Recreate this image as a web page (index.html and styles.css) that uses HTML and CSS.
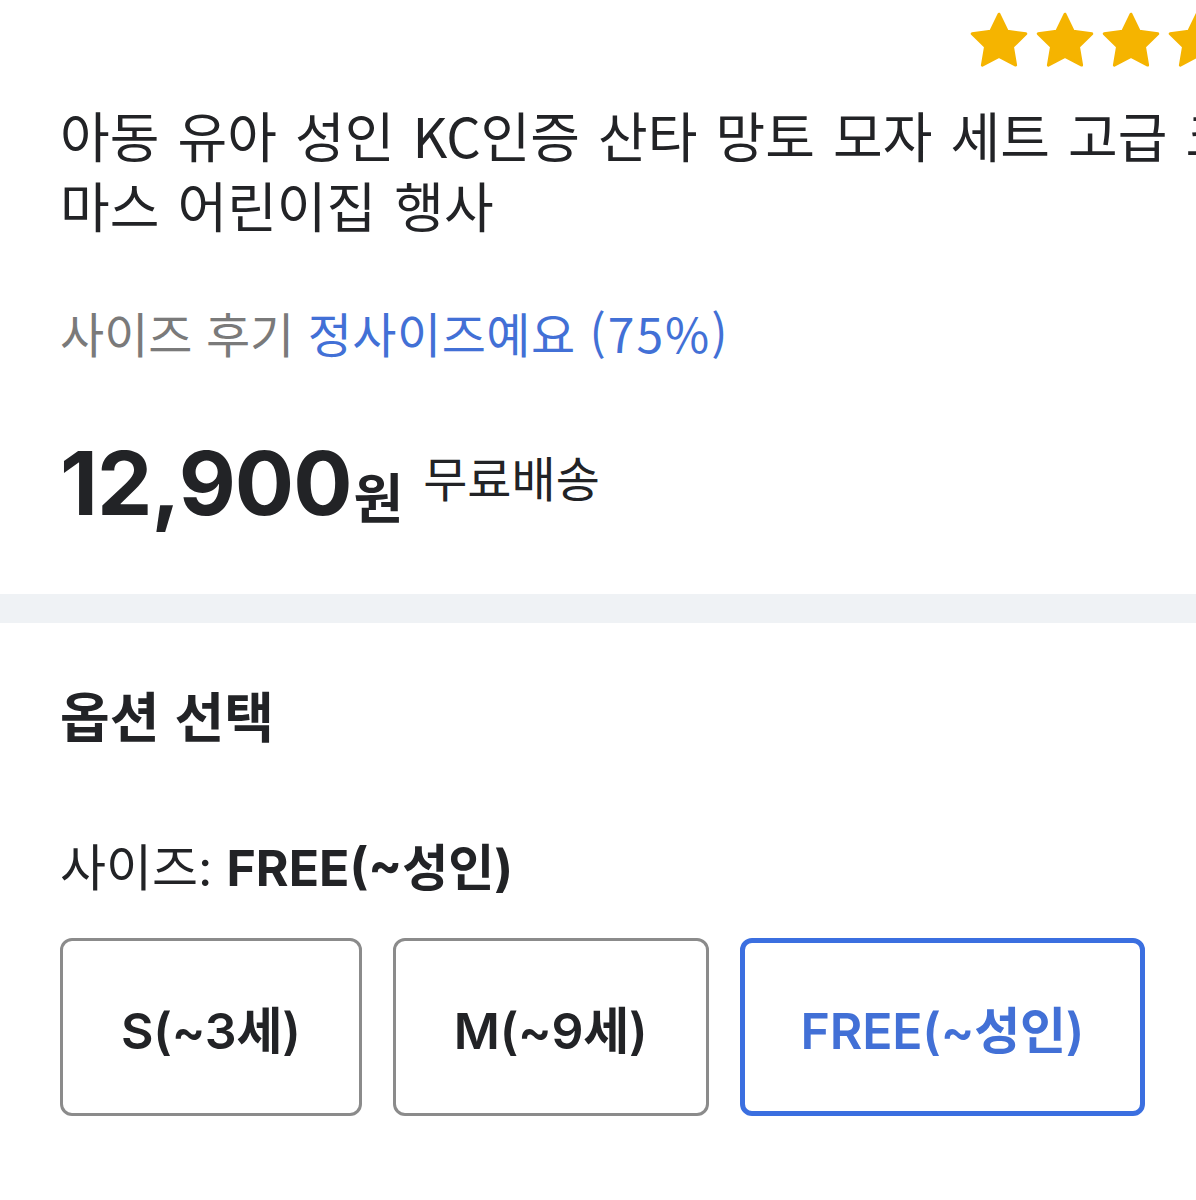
FILE: index.html
```html
<!DOCTYPE html>
<html lang="ko">
<head>
<meta charset="utf-8">
<link rel="stylesheet" href="styles.css">
</head>
<body>
<div class="page">
  <section class="summary">
    <div class="rating">
      <svg class="star" viewBox="0 0 24 24"><path d="M12 0.9L15.4 7.9 23.1 9 17.6 14.4 18.9 22 12 18.4 5.1 22 6.4 14.4 0.9 9 8.6 7.9Z"/></svg>
      <svg class="star" viewBox="0 0 24 24"><path d="M12 0.9L15.4 7.9 23.1 9 17.6 14.4 18.9 22 12 18.4 5.1 22 6.4 14.4 0.9 9 8.6 7.9Z"/></svg>
      <svg class="star" viewBox="0 0 24 24"><path d="M12 0.9L15.4 7.9 23.1 9 17.6 14.4 18.9 22 12 18.4 5.1 22 6.4 14.4 0.9 9 8.6 7.9Z"/></svg>
      <svg class="star" viewBox="0 0 24 24"><path d="M12 0.9L15.4 7.9 23.1 9 17.6 14.4 18.9 22 12 18.4 5.1 22 6.4 14.4 0.9 9 8.6 7.9Z"/></svg>
      <svg class="star" viewBox="0 0 24 24"><path d="M12 0.9L15.4 7.9 23.1 9 17.6 14.4 18.9 22 12 18.4 5.1 22 6.4 14.4 0.9 9 8.6 7.9Z"/></svg>
    </div>
    <h1 class="title">아동 유아 성인 KC인증 산타 망토 모자 세트 고급 크리스마스 어린이집 행사</h1>
    <p class="size-review">사이즈 후기 <span class="accent">정사이즈예요 <span class="pct">(75%)</span></span></p>
    <div class="price-row">
      <span class="price">12,900</span><span class="won">원</span>
      <span class="shipping">무료배송</span>
    </div>
  </section>
  <div class="divider"></div>
  <section class="options">
    <h2 class="options-title">옵션 선택</h2>
    <p class="selected-label">사이즈: <strong>FREE(~성인)</strong></p>
    <div class="choices">
      <button class="choice">S(~3세)</button>
      <button class="choice">M(~9세)</button>
      <button class="choice is-selected">FREE(~성인)</button>
    </div>
  </section>
</div>
</body>
</html>
```
FILE: styles.css
```css
html, body {
  margin: 0;
  padding: 0;
  background: #ffffff;
  overflow: hidden;
}
body {
  width: 1196px;
  font-family: Inter, "Noto Sans CJK KR", sans-serif;
  color: #222326;
}
.page {
  width: 1440px;
}
.summary {
  padding: 12px 60px 0 60px;
}
.rating {
  display: flex;
  justify-content: flex-end;
  gap: 8px;
  padding-right: 88px;
  height: 58px;
}
.star {
  width: 58px;
  height: 58px;
  fill: #f5b400;
  stroke: #f5b400;
  stroke-width: 1.2;
  stroke-linejoin: round;
}
.title {
  margin: 30px 0 0 0;
  font-family: "Noto Sans CJK KR", sans-serif;
  font-weight: 400;
  font-size: 54px;
  line-height: 70px;
  word-spacing: 3px;
  color: #222326;
}
.size-review {
  margin: 62px 0 0 0;
  font-family: "Noto Sans CJK KR", sans-serif;
  font-size: 48px;
  line-height: 60px;
  color: #7a7a7a;
}
.accent {
  color: #4270d6;
  letter-spacing: 0.5px;
}
.pct {
  letter-spacing: 2px;
}
.price-row {
  display: flex;
  align-items: flex-start;
  margin-top: 76px;
  height: 90px;
}
.price {
  font-family: Inter, sans-serif;
  font-weight: 700;
  font-size: 88px;
  line-height: 90px;
  letter-spacing: -1px;
  color: #222326;
}
.won {
  font-family: "Noto Sans CJK KR", sans-serif;
  font-weight: 700;
  font-size: 54px;
  line-height: 52px;
  margin-top: 32px;
  margin-left: 2px;
}
.shipping {
  font-family: "Noto Sans CJK KR", sans-serif;
  font-size: 48px;
  line-height: 52px;
  margin-left: 20px;
  margin-top: 12px;
  color: #222326;
}
.divider {
  margin-top: 66px;
  height: 29px;
  background: #eff2f5;
}
.options {
  padding: 57px 60px 0 60px;
}
.options-title {
  margin: 0;
  font-family: "Noto Sans CJK KR", sans-serif;
  font-weight: 700;
  font-size: 54px;
  line-height: 70px;
}
.selected-label {
  margin: 88px 0 0 0;
  font-family: Inter, "Noto Sans CJK KR", sans-serif;
  font-size: 50px;
  line-height: 60px;
}
.selected-label strong {
  font-weight: 700;
}
.choices {
  display: flex;
  gap: 31px;
  margin-top: 40px;
}
.choice {
  height: 178px;
  padding: 0 58px;
  background: #ffffff;
  border: 3px solid #8b8b8b;
  border-radius: 12px;
  font-family: Inter, "Noto Sans CJK KR", sans-serif;
  font-size: 50px;
  font-weight: 600;
  letter-spacing: -0.2px;
  color: #222326;
}
.choice.is-selected {
  border: 5px solid #3b6fe0;
  color: #4270d6;
  padding: 0 56px;
}
```
